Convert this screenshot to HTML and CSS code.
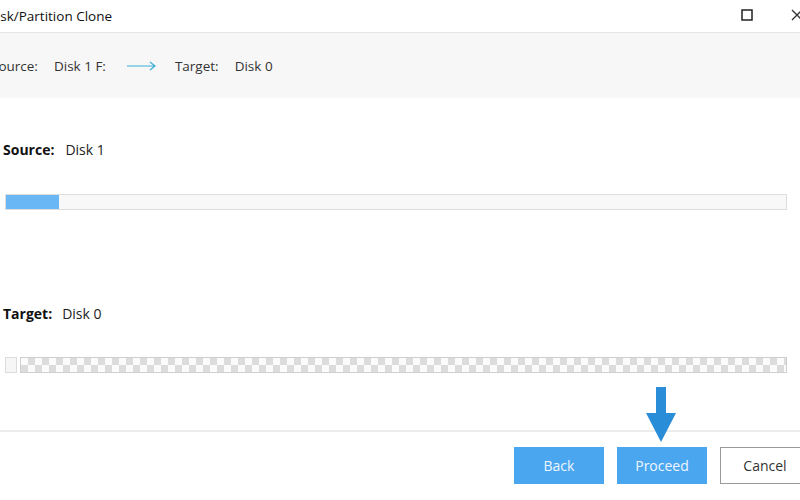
FILE: index.html
```html
<!DOCTYPE html>
<html lang="en">
<head>
    <meta charset="UTF-8">
    <title>Disk/Partition Clone</title>
    <link rel="stylesheet" href="styles.css">
</head>
<body>
    <div class="dialog">
        <div class="titlebar">
            <span class="title">Disk/Partition Clone</span>
            <div class="win-buttons">
                <svg class="win-icon" width="12" height="12" viewBox="0 0 12 12">
                    <rect x="1" y="1" width="10" height="10" fill="none" stroke="#222" stroke-width="1.5"/>
                </svg>
                <svg class="win-icon close" width="12" height="12" viewBox="0 0 12 12">
                    <path d="M1 1 L11 11 M11 1 L1 11" stroke="#333" stroke-width="1.3"/>
                </svg>
            </div>
        </div>

        <div class="summary">
            <span class="label cut">Source:</span>
            <span class="value">Disk 1 F:</span>
            <svg class="flow-arrow" width="30" height="10" viewBox="0 0 30 10">
                <path d="M0 5 H28 M23 1 L28 5 L23 9" fill="none" stroke="#3bb0d6" stroke-width="1.2"/>
            </svg>
            <span class="label">Target:</span>
            <span class="value">Disk 0</span>
        </div>

        <div class="content">
            <div class="disk-row">
                <b>Source:</b><span>Disk 1</span>
            </div>
            <div class="bar">
                <div class="bar-fill" style="width: 53px"></div>
            </div>

            <div class="disk-row target">
                <b>Target:</b><span>Disk 0</span>
            </div>
            <div class="target-bar">
                <div class="mini"></div>
                <div class="checker"></div>
            </div>
        </div>

        <div class="footer">
            <button class="btn primary">Back</button>
            <button class="btn primary">Proceed</button>
            <button class="btn">Cancel</button>
        </div>

        <!-- hint arrow over the Proceed button -->
        <svg class="hint" width="32" height="56" viewBox="0 0 32 56">
            <path d="M11 0 H21 V26 H31 L16 55 L1 26 H11 Z" fill="#2a8dd8"/>
        </svg>
    </div>
</body>
</html>
```

FILE: styles.css
```css
body {
    margin: 0;
    font-family: 'Open Sans', 'Noto Sans', sans-serif;
    font-size: 13px;
    color: #222;
    background: #fff;
    overflow: hidden;
}

.dialog {
    position: relative;
    width: 800px;
    height: 500px;
    overflow: hidden;
}

.titlebar {
    height: 32px;
    border-bottom: 1px solid #e4e4e4;
    display: flex;
    align-items: center;
    justify-content: space-between;
}

.title {
    margin-left: -13px;
    font-size: 13.5px;
    color: #111;
    padding-bottom: 1px;
}

.win-buttons {
    display: flex;
    gap: 38px;
    margin-right: -3px;
    margin-top: -2px;
}

.summary {
    height: 65px;
    background: #f7f7f7;
    display: flex;
    align-items: center;
    font-size: 13.5px;
    color: #333;
}

.summary .label.cut {
    margin-left: -9px;
}

.summary .value {
    margin-left: 18px;
}

.summary .flow-arrow {
    margin: 0 18px 0 21px;
}

.summary .label + .value {
    margin-left: 16px;
}

.content {
    padding: 0 13px 0 5px;
}

.disk-row {
    margin-top: 42px;
    margin-left: -2px;
    line-height: 20px;
    font-size: 14px;
    display: flex;
    gap: 11px;
}

.disk-row b {
    color: #111;
    font-weight: 700;
}

.disk-row.target {
    margin-top: 94px;
    gap: 10px;
}

.bar {
    margin-top: 34px;
    height: 14px;
    border: 1px solid #dddddd;
    background: #f8f8f8;
}

.bar-fill {
    height: 100%;
    background: #6ab7f6;
}

.target-bar {
    margin-top: 33px;
    display: flex;
    gap: 3px;
}

.mini {
    width: 10px;
    height: 14px;
    border: 1px solid #dcdcdc;
    background: #f6f6f6;
}

.checker {
    flex: 1;
    height: 14px;
    border: 1px solid #cfcfcf;
    background: repeating-conic-gradient(#dcdcdc 0 25%, #fbfbfb 0 50%) 0 0 / 14px 14px;
}

.footer {
    margin-top: 57px;
    border-top: 2px solid #ececec;
    padding-top: 15px;
    display: flex;
    justify-content: flex-end;
    gap: 13px;
    margin-right: -10px;
}

.btn {
    width: 90px;
    height: 37px;
    font-family: inherit;
    font-size: 14px;
    border: 1px solid #9a9a9a;
    background: #fff;
    color: #333;
}

.btn.primary {
    background: #4ba6f0;
    border-color: #4ba6f0;
    color: #eef6ff;
}

.hint {
    position: absolute;
    left: 645px;
    top: 387px;
}
```
